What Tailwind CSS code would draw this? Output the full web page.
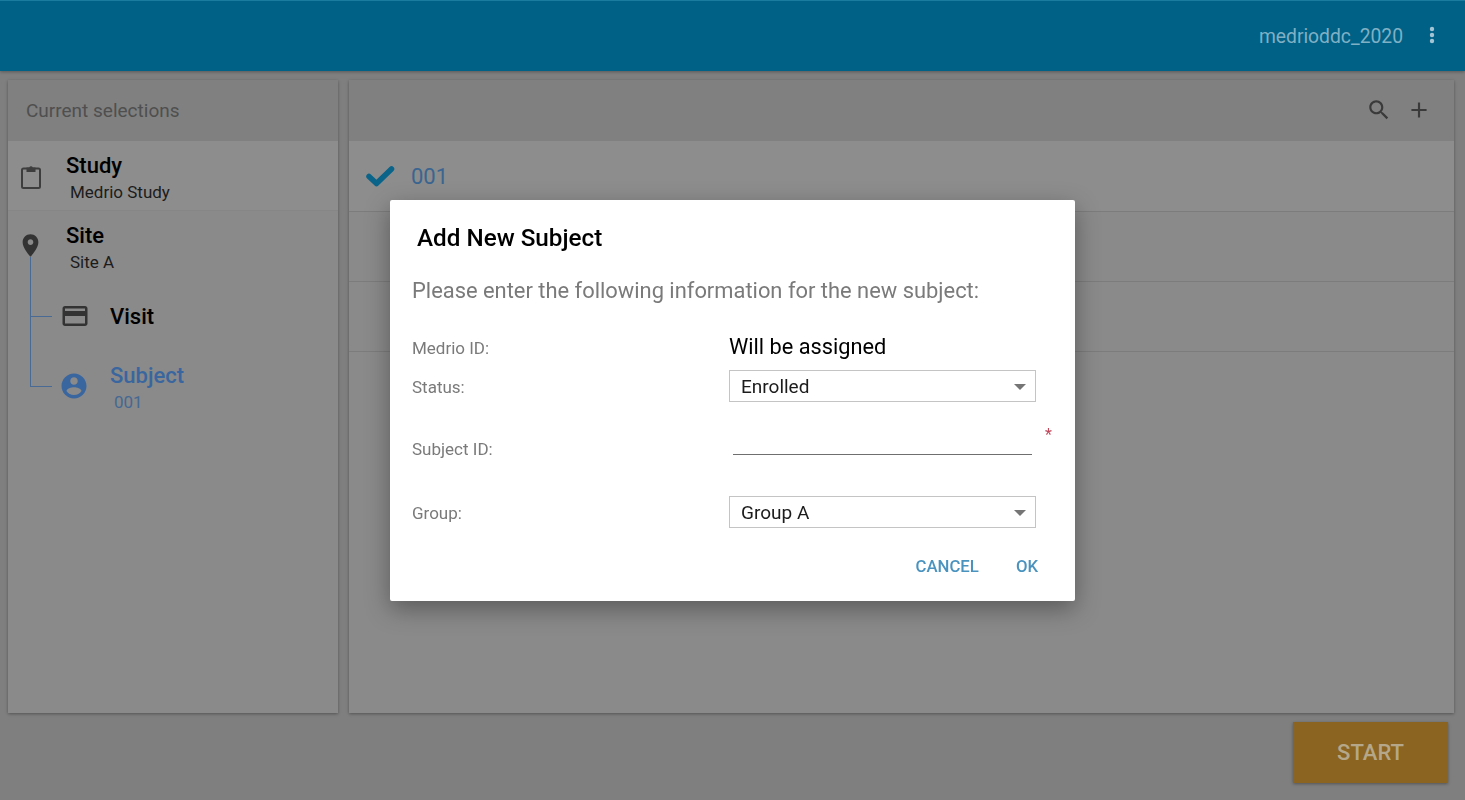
<!DOCTYPE html>
<html lang="en">
<head>
  <meta charset="UTF-8">
  <meta name="viewport" content="width=device-width, initial-scale=1.0">
  <title>Add New Subject</title>
  <script src="https://cdn.jsdelivr.net/npm/@tailwindcss/browser@4"></script>
</head>
<body class="bg-[#7f7f7f] font-['Roboto',sans-serif] h-[800px] overflow-hidden">
  <!-- top bar -->
  <header class="h-[71px] bg-[#006186] border-t border-[#1a7d9f] shadow-[0_1px_3px_rgba(0,0,0,0.3)] flex items-center justify-end pr-[23px] pb-[1px]">
    <span class="text-[19.3px] text-[#7fb0c4] mr-[19px] mt-[3px]">medrioddc_2020</span>
    <svg class="w-[20px] h-[24px] fill-[#a3c4d2] mt-[-1px]" viewBox="0 0 20 24"><circle cx="10" cy="6" r="2.2"/><circle cx="10" cy="12" r="2.2"/><circle cx="10" cy="18" r="2.2"/></svg>
  </header>

  <main class="flex gap-[11px] pl-[8px] pr-[11px] pt-[9px]">
    <!-- left panel -->
    <section class="relative w-[330px] h-[633px] bg-[#8a8a8a] shadow-[0_1px_3px_rgba(0,0,0,0.35)]">
      <div class="h-[61px] bg-[#808080] flex items-center pl-[18px] pt-[2px] text-[19px] text-[#4f4f4f]">Current selections</div>

      <div class="h-[70px] bg-[#8d8d8d] border-b border-[#868686] flex">
        <div class="w-[58px] pl-[13px] pt-[24px]">
          <svg class="w-[20px] h-[24px]" viewBox="0 0 20 24"><rect x="1" y="3.5" width="18" height="19.5" rx="1.5" fill="none" stroke="#3d3d3d" stroke-width="2"/><path d="M5.5 2.5h2.7a2 2 0 0 1 3.6 0h2.7V7h-9z" fill="#3d3d3d"/></svg>
        </div>
        <div class="pt-[11px]">
          <div class="text-[22px] leading-[28px] font-medium text-black">Study</div>
          <div class="text-[17px] leading-[22px] text-[#1c1c1c] pl-[4px] mt-[1px]">Medrio Study</div>
        </div>
      </div>

      <div class="h-[70px] flex">
        <div class="w-[58px] pl-[9px] pt-[21px]">
          <svg class="w-[27px] h-[27px] fill-[#333]" viewBox="0 0 24 24"><path d="M12 2C8.13 2 5 5.13 5 9c0 5.25 7 13 7 13s7-7.75 7-13c0-3.87-3.13-7-7-7zm0 9.5c-1.38 0-2.5-1.12-2.5-2.5s1.12-2.5 2.5-2.5 2.5 1.12 2.5 2.5-1.12 2.5-2.5 2.5z"/></svg>
        </div>
        <div class="pt-[11px]">
          <div class="text-[22px] leading-[28px] font-medium text-black">Site</div>
          <div class="text-[17px] leading-[22px] text-[#1c1c1c] pl-[4px] mt-[1px]">Site A</div>
        </div>
      </div>

      <div class="h-[70px] flex items-center pl-[52px]">
        <svg class="w-[30px] h-[30px] fill-[#333]" viewBox="0 0 24 24"><path d="M20 4H4c-1.11 0-1.99.89-1.99 2L2 18c0 1.11.89 2 2 2h16c1.11 0 2-.89 2-2V6c0-1.11-.89-2-2-2zm0 14H4v-6h16v6zm0-10H4V6h16v2z"/></svg>
        <div class="text-[22px] leading-[28px] font-medium text-black ml-[20px] mt-[2px]">Visit</div>
      </div>

      <div class="flex items-start pl-[52px]">
        <svg class="w-[30px] h-[30px] fill-[#3a669f] mt-[20px] ml-[-1px]" viewBox="0 0 24 24"><path d="M12 2C6.48 2 2 6.48 2 12s4.48 10 10 10 10-4.48 10-10S17.52 2 12 2zm0 3c1.66 0 3 1.34 3 3s-1.34 3-3 3-3-1.34-3-3 1.34-3 3-3zm0 14.2c-2.5 0-4.71-1.28-6-3.22.03-1.99 4-3.08 6-3.08 1.99 0 5.97 1.09 6 3.08-1.29 1.94-3.5 3.22-6 3.22z"/></svg>
        <div class="ml-[21px] mt-[11px]">
          <div class="text-[22px] leading-[28px] font-medium text-[#3a669f]">Subject</div>
          <div class="text-[17px] leading-[22px] text-[#456892] pl-[4px] mt-[1px]">001</div>
        </div>
      </div>

      <!-- tree connectors -->
      <div class="absolute left-[22px] top-[177px] w-px h-[130px] bg-[#4a6a96]"></div>
      <div class="absolute left-[22px] top-[236px] w-[22px] h-px bg-[#4a6a96]"></div>
      <div class="absolute left-[22px] top-[306px] w-[22px] h-px bg-[#4a6a96]"></div>
    </section>

    <!-- right panel -->
    <section class="w-[1105px] h-[633px] bg-[#8a8a8a] shadow-[0_1px_3px_rgba(0,0,0,0.35)]">
      <div class="h-[61px] bg-[#808080] flex items-center justify-end gap-[15px] pr-[23px] pb-[2px]">
        <svg class="w-[26px] h-[26px] fill-[#3a3a3a]" viewBox="0 0 24 24"><path d="M15.5 14h-.79l-.28-.27C15.41 12.59 16 11.11 16 9.5 16 5.91 13.09 3 9.5 3S3 5.91 3 9.5 5.91 16 9.5 16c1.61 0 3.09-.59 4.23-1.57l.27.28v.79l5 4.99L20.49 19l-4.99-5zm-6 0C7.01 14 5 11.99 5 9.5S7.01 5 9.5 5 14 7.01 14 9.5 11.99 14 9.5 14z"/></svg>
        <svg class="w-[26px] h-[26px] fill-[#3a3a3a] ml-[-1px] mr-[-1px]" viewBox="0 0 24 24"><path d="M19 13h-6v6h-2v-6H5v-2h6V5h2v6h6v2z"/></svg>
      </div>
      <div class="h-[71px] bg-[#8d8d8d] border-b border-[#7c7c7c] flex items-center pl-[16px]">
        <svg class="w-[30px] h-[24px] fill-none stroke-[#0a6388] stroke-[5.5]" stroke-linecap="round" stroke-linejoin="round" viewBox="0 0 30 24"><path d="M4 12.5l7.5 7L26.5 5"/></svg>
        <span class="text-[22px] text-[#3a6590] ml-[16px]">001</span>
      </div>
      <div class="h-[70px] border-b border-[#7c7c7c]"></div>
      <div class="h-[70px] border-b border-[#7c7c7c]"></div>
    </section>
  </main>

  <div class="flex justify-end pr-[17px] pt-[9px]">
    <button class="w-[155px] h-[61px] bg-[#8a6420] text-[22px] font-medium text-[#b5a789] shadow-[0_1px_3px_rgba(0,0,0,0.35)]">START</button>
  </div>

  <!-- dialog -->
  <div class="fixed inset-0 flex items-center justify-center">
    <div class="w-[685px] h-[401px] bg-white rounded-[2px] shadow-[0_8px_24px_rgba(0,0,0,0.35)] pl-[22px] pr-[37px]">
      <h2 class="text-[24.25px] leading-[30px] font-medium text-black pl-[5px] pt-[23px]">Add New Subject</h2>
      <p class="text-[21.9px] leading-[30px] text-[#7a7a7a] mt-[23px]">Please enter the following information for the new subject:</p>

      <div class="grid grid-cols-[317px_1fr] items-center mt-[20px]">
        <label class="text-[17px] text-[#7a7a7a] h-[44px] flex items-center pt-[2px]">Medrio ID:</label>
        <div class="text-[21.75px] text-black h-[44px] flex items-center">Will be assigned</div>

        <label class="text-[17px] text-[#7a7a7a] h-[32px] flex items-center pt-[4px]">Status:</label>
        <div class="relative h-[32px] w-[307px]">
          <select class="appearance-none w-full h-full border border-[#c4c4c4] pl-[11px] pt-[2px] text-[19px] text-[#1c1c1c] bg-white"><option>Enrolled</option></select>
          <div class="absolute right-[10px] top-[14px] border-x-[6px] border-x-transparent border-t-[6px] border-t-[#757575]"></div>
        </div>

        <label class="text-[17px] text-[#7a7a7a] h-[94px] flex items-center pt-[2px]">Subject ID:</label>
        <div class="relative h-[94px] w-[307px]">
          <input class="absolute left-[4px] top-[29px] w-[299px] h-[24px] border-b border-[#6f6f6f] outline-none">
          <span class="absolute left-[316px] top-[21px] text-[16px] text-[#c0485a]">*</span>
        </div>

        <label class="text-[17px] text-[#7a7a7a] h-[32px] flex items-center pt-[4px]">Group:</label>
        <div class="relative h-[32px] w-[307px]">
          <select class="appearance-none w-full h-full border border-[#c4c4c4] pl-[11px] pt-[2px] text-[19px] text-[#1c1c1c] bg-white"><option>Group A</option></select>
          <div class="absolute right-[10px] top-[14px] border-x-[6px] border-x-transparent border-t-[6px] border-t-[#757575]"></div>
        </div>
      </div>

      <div class="flex justify-end gap-[37px] mt-[26px] text-[16.75px] font-medium text-[#4a93bf]">
        <button>CANCEL</button>
        <button>OK</button>
      </div>
    </div>
  </div>
</body>
</html>
